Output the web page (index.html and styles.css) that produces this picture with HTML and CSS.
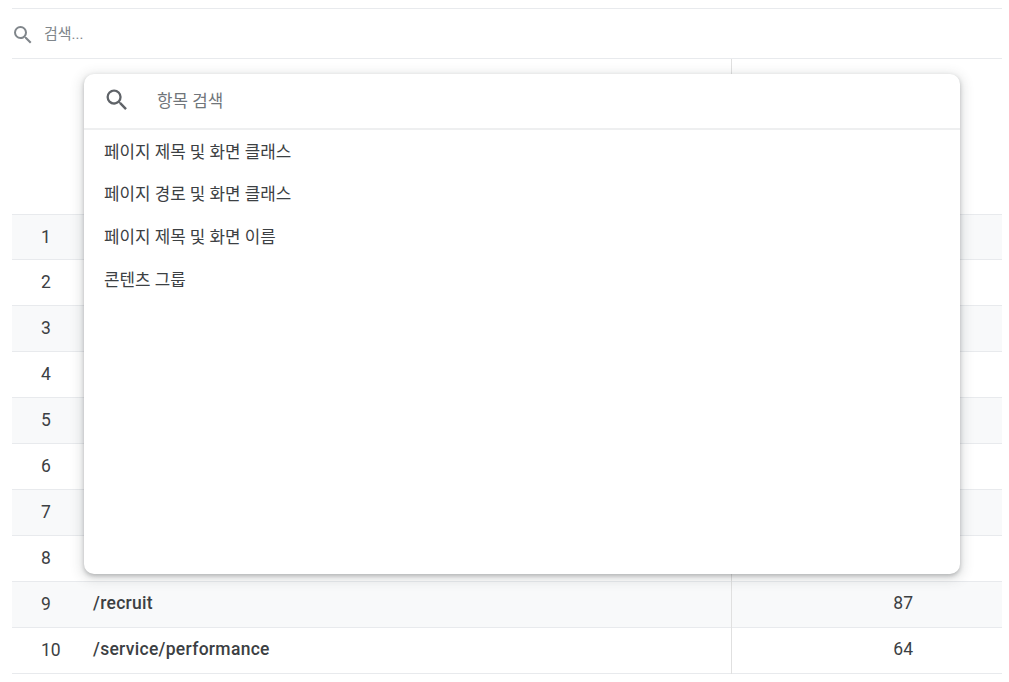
FILE: index.html
```html
<!DOCTYPE html>
<html lang="ko">
<head>
<meta charset="utf-8">
<title>검색</title>
<link rel="stylesheet" href="styles.css">
</head>
<body>
<div class="page">
  <div class="searchbar">
    <svg class="icon-small" viewBox="0 0 24 24"><path d="M15.5 14h-.79l-.28-.27A6.47 6.47 0 0 0 16 9.5 6.5 6.5 0 1 0 9.5 16c1.61 0 3.09-.59 4.23-1.57l.27.28v.79l5 4.99L20.49 19l-4.99-5zm-6 0C7.01 14 5 11.99 5 9.5S7.01 5 9.5 5 14 7.01 14 9.5 11.99 14 9.5 14z"/></svg>
    <span class="placeholder">검색...</span>
  </div>
  <div class="table">
    <div class="head"><div class="c-main"></div><div class="c-val"></div></div>
    <div class="row alt"><div class="c-idx">1</div><div class="c-name"></div><div class="c-val"></div></div>
    <div class="row"><div class="c-idx">2</div><div class="c-name"></div><div class="c-val"></div></div>
    <div class="row alt"><div class="c-idx">3</div><div class="c-name"></div><div class="c-val"></div></div>
    <div class="row"><div class="c-idx">4</div><div class="c-name"></div><div class="c-val"></div></div>
    <div class="row alt"><div class="c-idx">5</div><div class="c-name"></div><div class="c-val"></div></div>
    <div class="row"><div class="c-idx">6</div><div class="c-name"></div><div class="c-val"></div></div>
    <div class="row alt"><div class="c-idx">7</div><div class="c-name"></div><div class="c-val"></div></div>
    <div class="row"><div class="c-idx">8</div><div class="c-name"></div><div class="c-val"></div></div>
    <div class="row alt"><div class="c-idx">9</div><div class="c-name">/recruit</div><div class="c-val">87</div></div>
    <div class="row"><div class="c-idx">10</div><div class="c-name">/service/performance</div><div class="c-val">64</div></div>
  </div>
  <div class="menu">
    <div class="menu-search">
      <svg class="icon-large" viewBox="0 0 24 24"><path d="M15.5 14h-.79l-.28-.27A6.47 6.47 0 0 0 16 9.5 6.5 6.5 0 1 0 9.5 16c1.61 0 3.09-.59 4.23-1.57l.27.28v.79l5 4.99L20.49 19l-4.99-5zm-6 0C7.01 14 5 11.99 5 9.5S7.01 5 9.5 5 14 7.01 14 9.5 11.99 14 9.5 14z"/></svg>
      <span class="menu-placeholder">항목 검색</span>
    </div>
    <ul class="menu-list">
      <li>페이지 제목 및 화면 클래스</li>
      <li>페이지 경로 및 화면 클래스</li>
      <li>페이지 제목 및 화면 이름</li>
      <li>콘텐츠 그룹</li>
    </ul>
  </div>
</div>
</body>
</html>
```
FILE: styles.css
```css
* { box-sizing: border-box; }
html, body { margin: 0; padding: 0; background: #fff; height: 100%; overflow: hidden; }
body { font-family: Roboto, "Noto Sans CJK KR", sans-serif; color: #3c4043; }
.page { position: relative; width: 1009px; height: 682px; padding: 8px 7px 0 12px; }
.searchbar { height: 51px; border-top: 1px solid #e8eaed; border-bottom: 1px solid #e8eaed; display: flex; align-items: center; gap: 8px; }
.icon-small { width: 24px; height: 24px; fill: #80868b; margin-top: 2px; margin-left: -1px; }
.placeholder { font-size: 15px; color: #80868b; margin-top: -3px; margin-left: 1px; }
.head { height: 155.6px; display: flex; border-bottom: 1px solid #e8eaed; }
.c-main { height: 100%; flex: none; width: 720px; border-right: 1px solid #e0e0e0; }
.row { height: 45.9px; display: flex; align-items: stretch; border-bottom: 1px solid #e8eaed; font-size: 17.5px; line-height: 20px; color: #3c4043; }
.alt { background: #f8f9fa; }
.c-idx { width: 68px; display: flex; align-items: center; padding: 0 0 1px 29px; flex: none; }
.c-name { width: 652px; flex: none; display: flex; align-items: center; padding: 0 0 3px 13px; font-weight: 500; letter-spacing: .3px; border-right: 1px solid #e0e0e0; margin-bottom: -1px; }
.c-val { flex: 1; display: flex; align-items: center; justify-content: flex-end; padding: 0 89px 2px 0; }
.menu { position: absolute; left: 84px; top: 74px; width: 876px; height: 500px; background: #fff; border-radius: 10px; box-shadow: 0 2px 4px rgba(60,64,67,.3), 0 3px 12px 3px rgba(60,64,67,.15); }
.menu-search { height: 56px; border-bottom: 2px solid #eeeff0; display: flex; align-items: center; padding: 0 0 2px 19px; gap: 26px; }
.icon-large { width: 28px; height: 28px; fill: #5f6368; flex: none; }
.menu-placeholder { font-size: 16.85px; color: #70757a; margin-top: -1px; }
.menu-list { list-style: none; margin: -1px 0 0; padding: 0; }
.menu-list li { height: 42.6px; display: flex; align-items: center; padding-left: 20px; font-size: 16.85px; color: #3c4043; }
```
